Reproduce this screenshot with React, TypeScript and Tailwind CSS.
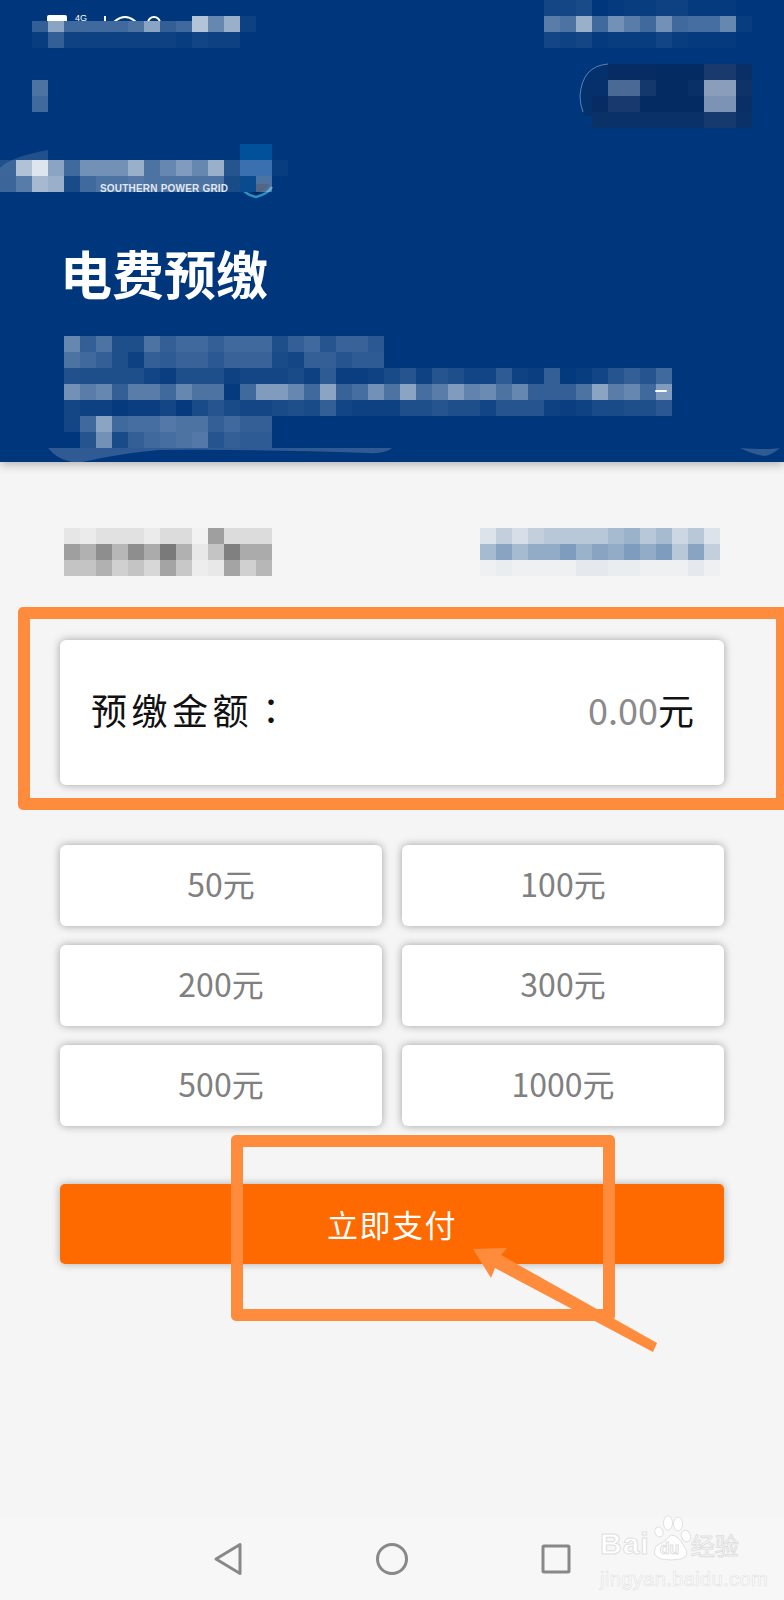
import React from "react";

type Cell = number | string;

// one block of the censoring mosaic: numbers are opacities of `color`, strings are solid fills
function Mosaic({ rows, color = "#ffffff", className = "block" }: { rows: Cell[][]; color?: string; className?: string }) {
  const cols = Math.max(...rows.map((r) => r.length));
  return (
    <svg className={className} width={cols * 16} height={rows.length * 16}>
      {rows.map((row, y) =>
        row.map((c, x) =>
          c === 0 ? null : (
            <rect
              key={`${x}-${y}`}
              x={x * 16}
              y={y * 16}
              width={16}
              height={16}
              fill={typeof c === "string" ? c : color}
              fillOpacity={typeof c === "string" ? 1 : c}
            />
          )
        )
      )}
    </svg>
  );
}

const amounts = ["50元", "100元", "200元", "300元", "500元", "1000元"];

function StatusIcons() {
  return (
    <svg className="absolute left-0 top-[-2px]" width={160} height={7}>
      <rect width={160} height={7} fill="#00377c" />
      <rect x={15} y={1} width={20} height={9} rx={2} fill="#ffffff" />
      <text x={43} y={7} fill="#ffffff" fontSize={9} fontFamily="Liberation Sans, sans-serif">
        4G
      </text>
      <rect x={72} y={2} width={2} height={5} fill="#ffffff" />
      <path d="M82 8 Q93 -2 104 8" stroke="#ffffff" strokeWidth={2} fill="none" />
      <circle cx={122} cy={9} r={6} stroke="#ffffff" strokeWidth={2} fill="none" />
    </svg>
  );
}

function Header() {
  return (
    <header className="relative flex h-[462px] shrink-0 flex-col bg-[#00377c] shadow-[0_2px_10px_rgba(0,0,0,0.3)]">
      {/* status bar */}
      <div className="flex items-start justify-between pl-[32px] pr-[32px]">
        <div className="relative mt-[16px]">
          <Mosaic
            rows={[
              [0.2, 0.55, 0.25, 0.25, 0.25, 0.25, 0.3, 0.55, 0.2, 0.25, 0.7, 0.4, 0.6, 0.05],
              [0.03, 0.2, 0.06, 0.05, 0.05, 0.05, 0.05, 0.05, 0.05, 0.03, 0.07, 0.05, 0.05, 0],
            ]}
          />
          <StatusIcons />
        </div>
        <Mosaic
          rows={[
            [0.08, 0.08, 0.1, 0, 0.02, 0.03, 0.03, 0.05, 0.05, 0.02, 0.02, 0.02, 0],
            [0.35, 0.3, 0.6, 0.25, 0.45, 0.35, 0.25, 0.45, 0.25, 0.28, 0.28, 0.4, 0.03],
            [0.08, 0.06, 0.08, 0.02, 0.03, 0.03, 0.03, 0.07, 0.03, 0.02, 0.02, 0.02, 0],
          ]}
        />
      </div>

      {/* toolbar: back button and the pill */}
      <div className="mt-[16px] flex items-start justify-between pl-[32px] pr-[32px]">
        <Mosaic className="mt-[16px] block" rows={[[0.3], [0.25]]} />
        <div className="relative">
          <svg className="absolute left-[-16px] top-[-4px]" width={40} height={70} fill="none">
            <path d="M32 4.5 L32 56 L8 56 Q5 46 5 36 Q7 7 32 4.5Z" fill="#04306c" />
            <path d="M32 4 Q6 6 4 36 Q4 44 7 52" stroke="#5c7fb0" strokeWidth={1} />
          </svg>
          <Mosaic
            className="relative block"
            rows={[
              [0, "#062c63", "#062c63", "#062c63", "#052b63", "#052b63", "#052b63", "#1a3a6e", "#1a3a6e", "#0a2e66"],
              ["#06306b", "#4a6a95", "#4a6a95", "#15386c", "#052b63", "#052b63", "#0a3068", "#8a9dbb", "#8a9dbb", "#0f3369"],
              ["#062c63", "#17396d", "#17396d", "#052b63", "#052b63", "#052b63", "#052b63", "#7d93b5", "#7d93b5", "#0a2e66"],
              ["#0a3168", "#0a3168", "#0a3168", "#0a3168", "#0a3168", "#0a3168", "#0a3168", "#163a6e", "#163a6e", "#0a3168"],
            ]}
          />
        </div>
      </div>

      {/* logo, mostly hidden under the mosaic */}
      <div className="relative mt-[16px] w-[288px]">
        <span className="absolute left-[100px] top-[37px] font-['Liberation_Sans',sans-serif] text-[10px] font-bold leading-4 tracking-[0.2px] text-[#d5deea]">
          SOUTHERN POWER GRID
        </span>
        <svg className="absolute left-[238px] top-[34px]" width={36} height={24} fill="none">
          <path d="M3 6 Q4 16 18 19 Q30 16 34 9" stroke="#2d8fc4" strokeWidth={2.5} />
          <path d="M6 6 Q8 13 18 16 Q28 13 32 6Z" fill="#0b2250" />
        </svg>
        <svg className="absolute left-0 top-[6px]" width={70} height={42}>
          <path d="M0 42 L0 18 Q10 7 48 0 L48 42Z" fill="#ffffff" fillOpacity={0.13} />
        </svg>
        <Mosaic
          className="relative block"
          rows={[
            [0, 0, 0, 0, 0, 0, 0, 0, 0, 0, 0, 0, 0, 0, 0, "#00509a", "#00509a", 0],
            [0.13, 0.65, 0.85, 0.55, 0.25, 0.45, 0.45, 0.45, 0.6, 0.3, 0.4, 0.5, 0.4, 0.6, 0.15, "#3a6fb0", "#3a6fb0", 0.03],
            [0.12, 0.25, 0.6, 0.6, 0.1, 0.25, 0.3, 0.3, 0.33, 0.3, 0.3, 0.3, 0.3, 0.3, 0.1, "#0a4a8f", 0.3, 0],
          ]}
        />
      </div>

      <h1 className="mt-[46px] pl-[60px] text-[52px] font-bold leading-[70px] text-white">电费预缴</h1>

      {/* address lines */}
      <div className="relative ml-[64px] mt-[28px] self-start">
        <Mosaic
          rows={[
            [0.4, 0.2, 0.3, 0.12, 0.12, 0.3, 0.2, 0.25, 0.25, 0.2, 0.25, 0.25, 0.25, 0.12, 0.2, 0.25, 0.15, 0.22, 0.22, 0.17],
            [0.3, 0.25, 0.2, 0.12, 0.05, 0.2, 0.18, 0.22, 0.22, 0.17, 0.22, 0.22, 0.22, 0.1, 0.08, 0.2, 0.2, 0.15, 0.18, 0.18],
            [0.13, 0.12, 0.12, 0.12, 0.12, 0.07, 0.04, 0.12, 0.12, 0.12, 0.05, 0.08, 0.08, 0.08, 0.1, 0.05, 0.18, 0.04, 0.04, 0.06, 0.1, 0.15, 0.06, 0.15, 0.12, 0.07, 0.07, 0.18, 0.06, 0.04, 0.2, 0.01, 0.03, 0.07, 0.15, 0.2, 0.15, 0.25],
            [0.45, 0.35, 0.4, 0.2, 0.35, 0.35, 0.25, 0.4, 0.3, 0.3, 0.02, 0.25, 0.5, 0.5, 0.4, 0.25, 0.55, 0.22, 0.28, 0.45, 0.3, 0.55, 0.28, 0.35, 0.5, 0.38, 0.42, 0.3, 0.4, 0.2, 0.2, 0.2, 0.3, 0.55, 0.35, 0.4, 0.25, 0.5],
            [0.08, 0.05, 0.05, 0.02, 0.04, 0.04, 0.08, 0.02, 0.1, 0.15, 0.1, 0.08, 0.08, 0.1, 0.12, 0.1, 0.2, 0.07, 0.05, 0.05, 0.05, 0.12, 0.12, 0.15, 0.12, 0.12, 0.07, 0.15, 0.15, 0.15, 0.05, 0.04, 0.06, 0.1, 0.1, 0.12, 0.12, 0.17],
            [0.08, 0.25, 0.55, 0.25, 0.28, 0.28, 0.33, 0.3, 0.3, 0.2, 0.25, 0.2, 0.2],
            [0, 0.15, 0.45, 0.1, 0.2, 0.25, 0.28, 0.3, 0.33, 0.15, 0.2, 0.18, 0.18],
          ]}
        />
        <span className="absolute left-[591px] top-[54px] h-[2px] w-[12px] rounded-full bg-white" />
      </div>

      {/* smear left by the retouching along the bottom edge */}
      <svg className="ml-[48px] block" width={736} height={16}>
        <path d="M0 0 L344 0 Q338 6 320 5 Q200 1 112 2 Q75 5 39 13 Q28 16 20 13 Q8 10 0 0Z" fill="#2f5a94" />
        <path d="M692 0 Q720 2 732 0 Q722 8 716 8 Q704 6 692 0Z" fill="#2f5a94" />
      </svg>
    </header>
  );
}

function Watermark() {
  return (
    <div className="absolute right-[40px] top-[-3px] flex w-[144px] flex-col font-['Liberation_Sans','Noto_Sans_CJK_SC',sans-serif] text-white">
      <div className="flex items-end font-bold [-webkit-text-stroke:1px_#e0e0e0]">
        <span className="pb-[3px] text-[30px] leading-[30px] tracking-[1px]">Bai</span>
        <div className="relative ml-[1px] h-[47px] w-[40px] shrink-0">
          <svg width={40} height={47} fill="#ffffff" stroke="#e0e0e0">
            <ellipse cx={8} cy={17} rx={4} ry={5} transform="rotate(-25 8 17)" />
            <ellipse cx={17} cy={8} rx={4.5} ry={7} />
            <ellipse cx={27} cy={9} rx={4.5} ry={7} />
            <ellipse cx={35} cy={21} rx={4.5} ry={6} transform="rotate(-20 35 21)" />
            <path d="M20 20 Q27 20 33 31 Q40 41 30 44 Q20 46 10 44 Q0 41 5 31 Q13 28 20 20Z" />
          </svg>
          <span className="absolute left-[9px] top-[26px] text-[16px] leading-[16px]">du</span>
        </div>
        <span className="pb-[2px] text-[24px] font-normal leading-[26px]">经验</span>
      </div>
      <span className="mt-[7px] text-[20px] leading-[20px] tracking-[0.4px] [-webkit-text-stroke:0.7px_#e4e4e4]">
        jingyan.baidu.com
      </span>
    </div>
  );
}

function NavBar() {
  return (
    <nav className="relative mt-auto flex h-[82px] items-center justify-center gap-[132px] bg-[#f7f7f7] pr-[1px]">
      <svg width={32} height={34} viewBox="0 0 32 34" fill="none" stroke="#888888" strokeWidth={3} strokeLinejoin="round">
        <path d="M28 2.5 L28 31.5 L4 17Z" />
      </svg>
      <svg width={32} height={34} viewBox="0 0 32 34" fill="none" stroke="#888888" strokeWidth={3}>
        <ellipse cx={16} cy={17} rx={14.5} ry={14.5} />
      </svg>
      <svg width={32} height={34} viewBox="0 0 32 34" fill="none" stroke="#888888" strokeWidth={3} strokeLinejoin="round">
        <rect x={3} y={4} width={26} height={26} rx={1} />
      </svg>
      <Watermark />
    </nav>
  );
}

export default function App() {
  return (
    <div className="relative flex h-[1600px] w-[784px] flex-col overflow-hidden bg-[#f5f5f5] font-['Noto_Sans_CJK_SC','Noto_Sans',sans-serif]">
      <Header />

      <main className="px-[60px]">
        <div className="mt-[66px] flex justify-between px-[4px]">
          <Mosaic
            color="#000000"
            rows={[
              [0.06, 0.04, 0.08, 0.08, 0.08, 0.04, 0.1, 0.1, 0.01, 0.35, 0.1, 0.1, 0.1],
              [0.35, 0.28, 0.42, 0.25, 0.42, 0.3, 0.5, 0.28, 0.05, 0.2, 0.48, 0.3, 0.3],
              [0.2, 0.2, 0.28, 0.15, 0.2, 0.12, 0.33, 0.18, 0.03, 0.05, 0.33, 0.15, 0.25],
            ]}
          />
          <Mosaic
            color="#2f6199"
            rows={[
              [0.12, 0.25, 0.15, 0.25, 0.3, 0.3, 0.3, 0.3, 0.4, 0.45, 0.3, 0.4, 0.2, 0.3, 0.12],
              [0.4, 0.55, 0.4, 0.5, 0.5, 0.6, 0.45, 0.55, 0.5, 0.6, 0.5, 0.6, 0.3, 0.55, 0.25],
              [0.03, 0.05, 0.03, 0.03, 0.03, 0.03, 0.08, 0.08, 0.05, 0.05, 0.03, 0.03, 0.03, 0.08, 0.03],
            ]}
          />
        </div>

        <section className="mt-[64px] flex h-[145px] items-center justify-between rounded-[6px] bg-white pb-[7px] pl-[31px] pr-[30px] shadow-[0_0_8px_rgba(0,0,0,0.35)]">
          <span className="text-[36px] leading-none tracking-[4.5px] text-[#111111]">
            预缴金额
            <span className="font-['Noto_Sans_CJK_TC',sans-serif]">：</span>
          </span>
          <span className="text-[36px] leading-none text-[#111111]">
            <span className="text-[#8a8a8a]">0.00</span>元
          </span>
        </section>

        <div className="mt-[60px] grid grid-cols-2 gap-x-[20px] gap-y-[19px]">
          {amounts.map((a) => (
            <button
              key={a}
              className="flex h-[81px] items-center justify-center rounded-[6px] bg-white pb-[6px] text-[32px] text-[#808080] shadow-[0_0_8px_rgba(0,0,0,0.35)]"
            >
              {a}
            </button>
          ))}
        </div>

        <button className="mt-[58px] flex h-[80px] w-full items-center justify-center rounded-[5px] bg-[#ff6a00] text-[31px] tracking-[1.5px] text-white shadow-[0_0_8px_rgba(0,0,0,0.3)]">
          立即支付
        </button>
      </main>

      <NavBar />

      {/* hand-drawn annotations on top of the screenshot */}
      <div className="absolute left-[18px] top-[607px] h-[203px] w-[770px] rounded-[5px] border-[12px] border-[#ff8c3c]" />
      <div className="absolute left-[231px] top-[1135px] h-[186px] w-[384px] rounded-[5px] border-[12px] border-[#ff8c3c]" />
      <svg className="absolute left-[460px] top-[1240px]" width={210} height={120} fill="#ff8c3c">
        <path d="M13 9 L47 8 L41 15 L197 103 L193 112 L35 28 L31 38Z" />
      </svg>
    </div>
  );
}
